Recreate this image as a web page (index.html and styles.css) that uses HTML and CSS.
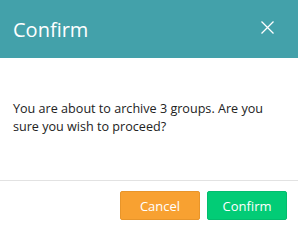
FILE: index.html
```html
<!DOCTYPE html>
<html lang="en">
<head>
  <meta charset="UTF-8"/>
  <title>Confirm</title>
  <link rel="stylesheet" href="styles.css">
</head>
<body>
  <div class="modal">
    <div class="modal-header">
      <h2>Confirm</h2>
      <button class="close" aria-label="Close">
        <svg width="13" height="13" viewBox="0 0 13 13"><path d="M0.5 0.5L12.5 12.5M12.5 0.5L0.5 12.5" stroke="#fff" stroke-width="1.3" fill="none"/></svg>
      </button>
    </div>
    <div class="modal-body">
      <p>You are about to archive 3 groups. Are you sure you wish to proceed?</p>
    </div>
    <div class="modal-footer">
      <button class="btn btn-cancel">Cancel</button>
      <button class="btn btn-confirm">Confirm</button>
    </div>
  </div>
</body>
</html>
```

FILE: styles.css
```css
body {
  margin: 0;
  background: #fff;
  font-family: "Open Sans", Arial, sans-serif;
}
.modal {
  width: 298px;
}
.modal-header {
  height: 58px;
  background: #43a1aa;
  display: flex;
  align-items: center;
  justify-content: space-between;
  padding: 0 24px 0 13px;
  box-sizing: border-box;
}
.modal-header h2 {
  margin: 0;
  color: #fff;
  font-size: 20px;
  font-weight: 400;
}
.close {
  background: transparent;
  border: none;
  padding: 0;
  margin-bottom: 3px;
  display: flex;
}
.modal-body {
  padding: 42px 13px 0;
  height: 123px;
  box-sizing: border-box;
  border-bottom: 1px solid #e2e2e2;
}
.modal-body p {
  margin: 0;
  font-size: 12.6px;
  line-height: 18px;
  color: #222;
}
/* FOOTER BUTTONS */
.modal-footer {
  display: flex;
  justify-content: flex-end;
  gap: 7px;
  padding: 10px 11px;
}
.btn {
  width: 80px;
  height: 29px;
  border-radius: 2px;
  font-family: "Open Sans", Arial, sans-serif;
  font-size: 13px;
  color: #fff;
  cursor: pointer;
}
.btn-cancel {
  background: #f8a131;
  border: 1px solid #e8952a;
}
.btn-confirm {
  background: #02cc76;
  border: 1px solid #02bd6e;
}
```
